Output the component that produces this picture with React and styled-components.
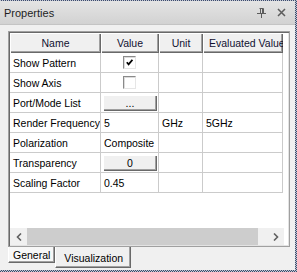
import React from "react";
import styled, { createGlobalStyle } from "styled-components";

const GlobalStyle = createGlobalStyle`
  html, body {
    margin: 0;
    padding: 0;
    background: #f0f0f0;
  }
  body {
    font-family: "Liberation Sans", Arial, sans-serif;
  }
`;

const rows = [
  { name: "Show Pattern", kind: "check", checked: true },
  { name: "Show Axis", kind: "check", checked: false },
  { name: "Port/Mode List", kind: "button", label: "..." },
  { name: "Render Frequency", value: "5", unit: "GHz", evaluated: "5GHz" },
  { name: "Polarization", value: "Composite" },
  { name: "Transparency", kind: "button", label: "0" },
  { name: "Scaling Factor", value: "0.45" },
];

const Frame = styled.div`
  width: 297px;
  height: 272px;
  box-sizing: border-box;
  padding: 1px 2px 2px 0;
  background: repeating-conic-gradient(#3c4a6c 0 25%, #c3c8d3 0 50%) 0 0 / 2px 2px;
`;

const Window = styled.div`
  height: 100%;
  background: #f0f0f0;
  display: flex;
  flex-direction: column;
`;

const TitleBar = styled.div`
  height: 23px;
  flex: none;
  display: flex;
  align-items: center;
  justify-content: space-between;
  padding: 0 9px 0 4px;
  background: linear-gradient(#e4e4e4, #d2d2d2);
  border-bottom: 1px solid #c4c4c4;
  font-size: 11px;
  color: #1e1e1e;
`;

const TitleTools = styled.div`
  display: flex;
  align-items: center;
  gap: 11px;
`;

const Body = styled.div`
  flex: 1;
  display: flex;
  flex-direction: column;
  padding: 6px 5px 0 8px;
`;

const Panel = styled.div`
  height: 216px;
  box-sizing: border-box;
  border: 1px solid #a0a0a0;
  box-shadow: inset 1px 1px #696969, inset -1px -1px #e3e3e3;
  padding: 1px 5px 1px 1px;
  background: #fff;
  display: flex;
  flex-direction: column;
`;

const Grid = styled.div`
  flex: 1;
  display: grid;
  grid-template-columns: 91px 58px 44px 80px;
  grid-auto-rows: 20px;
  align-content: start;
  overflow: hidden;
  font-size: 10.5px;
  color: #000;
`;

const HeadCell = styled.div`
  box-sizing: border-box;
  background: #f0f0f0;
  box-shadow: inset 1px 1px #fff, inset -1px -1px #696969, inset -2px -2px #a0a0a0;
  display: flex;
  align-items: center;
  justify-content: ${(p) => (p.$left ? "flex-start" : "center")};
  padding-left: ${(p) => (p.$left ? "6px" : "0")};
  white-space: nowrap;
  overflow: hidden;
  color: #101030;
`;

const Cell = styled.div`
  box-sizing: border-box;
  border-right: 1px solid #cbcbcb;
  border-bottom: 1px solid #cbcbcb;
  display: flex;
  align-items: center;
  justify-content: ${(p) => (p.$center ? "center" : "flex-start")};
  padding-left: ${(p) => (p.$center ? "0" : "3px")};
  white-space: nowrap;
  overflow: hidden;
`;

const CheckBox = styled.span`
  width: 13px;
  height: 13px;
  box-sizing: border-box;
  background: #fff;
  border-top: 1px solid #8a8a8a;
  border-left: 1px solid #8a8a8a;
  border-right: 1px solid #e6e6e6;
  border-bottom: 1px solid #e6e6e6;
  box-shadow: inset 1px 1px #dcdcdc;
  display: flex;
  align-items: center;
  justify-content: center;
`;

const CellButton = styled.span`
  width: 54px;
  height: 16px;
  margin-left: 1px;
  box-sizing: border-box;
  background: #f0f0f0;
  box-shadow: inset 1px 1px #fff, inset -1px -1px #696969, inset -2px -2px #a0a0a0;
  display: flex;
  align-items: center;
  justify-content: center;
  font-size: 10.5px;
`;

const ScrollBar = styled.div`
  height: 17px;
  flex: none;
  display: flex;
  background: #f0f0f0;
`;

const Arrow = styled.div`
  width: 17px;
  display: flex;
  align-items: center;
  justify-content: center;
`;

const Track = styled.div`
  flex: 1;
  display: flex;
  padding-right: 9px;
`;

const Thumb = styled.div`
  flex: 1;
  background: #cdcdcd;
`;

const Tabs = styled.div`
  height: 21px;
  display: flex;
  align-items: flex-start;
  font-size: 10.5px;
  color: #000;
`;

const Tab = styled.div`
  box-sizing: border-box;
  height: ${(p) => (p.$active ? "21px" : "16px")};
  padding: ${(p) => (p.$active ? "5px 7px 0 8px" : "2px 4px 0 4px")};
  background: ${(p) => (p.$active ? "#f0f0f0" : "#f7f7f7")};
  border-left: 1px solid #fff;
  border-right: 1px solid #696969;
  border-bottom: 1px solid #696969;
  box-shadow: inset -1px -1px #a0a0a0;
  white-space: nowrap;
`;

const PinIcon = () => (
  <svg width="9" height="10" viewBox="0 0 9 10">
    <path d="M2.5 0.5h4v5M3.5 0.5v5M5.5 0.5v5M0 5.5h9M4.5 5.5v4.5" stroke="#5c5c5c" fill="none" />
  </svg>
);

const CloseIcon = () => (
  <svg width="9" height="9" viewBox="0 0 9 9">
    <path d="M1 1l7 7M8 1l-7 7" stroke="#5c5c5c" strokeWidth="1.5" />
  </svg>
);

const Check = () => (
  <svg width="7" height="7" viewBox="0 0 7 7">
    <path d="M0.8 3.2l1.8 2.2 3.8-4.6" stroke="#000" strokeWidth="1.7" fill="none" />
  </svg>
);

const Chevron = ({ left }) => (
  <svg width="6" height="8" viewBox="0 0 6 8">
    <path d={left ? "M5 0.5L1.5 4 5 7.5" : "M1 0.5L4.5 4 1 7.5"} stroke="#606060" strokeWidth="1.6" fill="none" />
  </svg>
);

const renderValue = (row) => {
  if (row.kind === "check") {
    return (
      <Cell $center>
        <CheckBox>{row.checked && <Check />}</CheckBox>
      </Cell>
    );
  }
  if (row.kind === "button") {
    return (
      <Cell $center>
        <CellButton>{row.label}</CellButton>
      </Cell>
    );
  }
  return <Cell>{row.value}</Cell>;
};

export default function App() {
  return (
    <>
      <GlobalStyle />
      <Frame>
        <Window>
          <TitleBar>
            <span>Properties</span>
            <TitleTools>
              <PinIcon />
              <CloseIcon />
            </TitleTools>
          </TitleBar>
          <Body>
            <Panel>
              <Grid>
                <HeadCell>Name</HeadCell>
                <HeadCell>Value</HeadCell>
                <HeadCell>Unit</HeadCell>
                <HeadCell $left>Evaluated Value</HeadCell>
                {rows.map((row) => (
                  <React.Fragment key={row.name}>
                    <Cell>{row.name}</Cell>
                    {renderValue(row)}
                    <Cell>{row.unit}</Cell>
                    <Cell>{row.evaluated}</Cell>
                  </React.Fragment>
                ))}
              </Grid>
              <ScrollBar>
                <Arrow>
                  <Chevron left />
                </Arrow>
                <Track>
                  <Thumb />
                </Track>
                <Arrow>
                  <Chevron />
                </Arrow>
              </ScrollBar>
            </Panel>
            <Tabs>
              <Tab>General</Tab>
              <Tab $active>Visualization</Tab>
            </Tabs>
          </Body>
        </Window>
      </Frame>
    </>
  );
}
